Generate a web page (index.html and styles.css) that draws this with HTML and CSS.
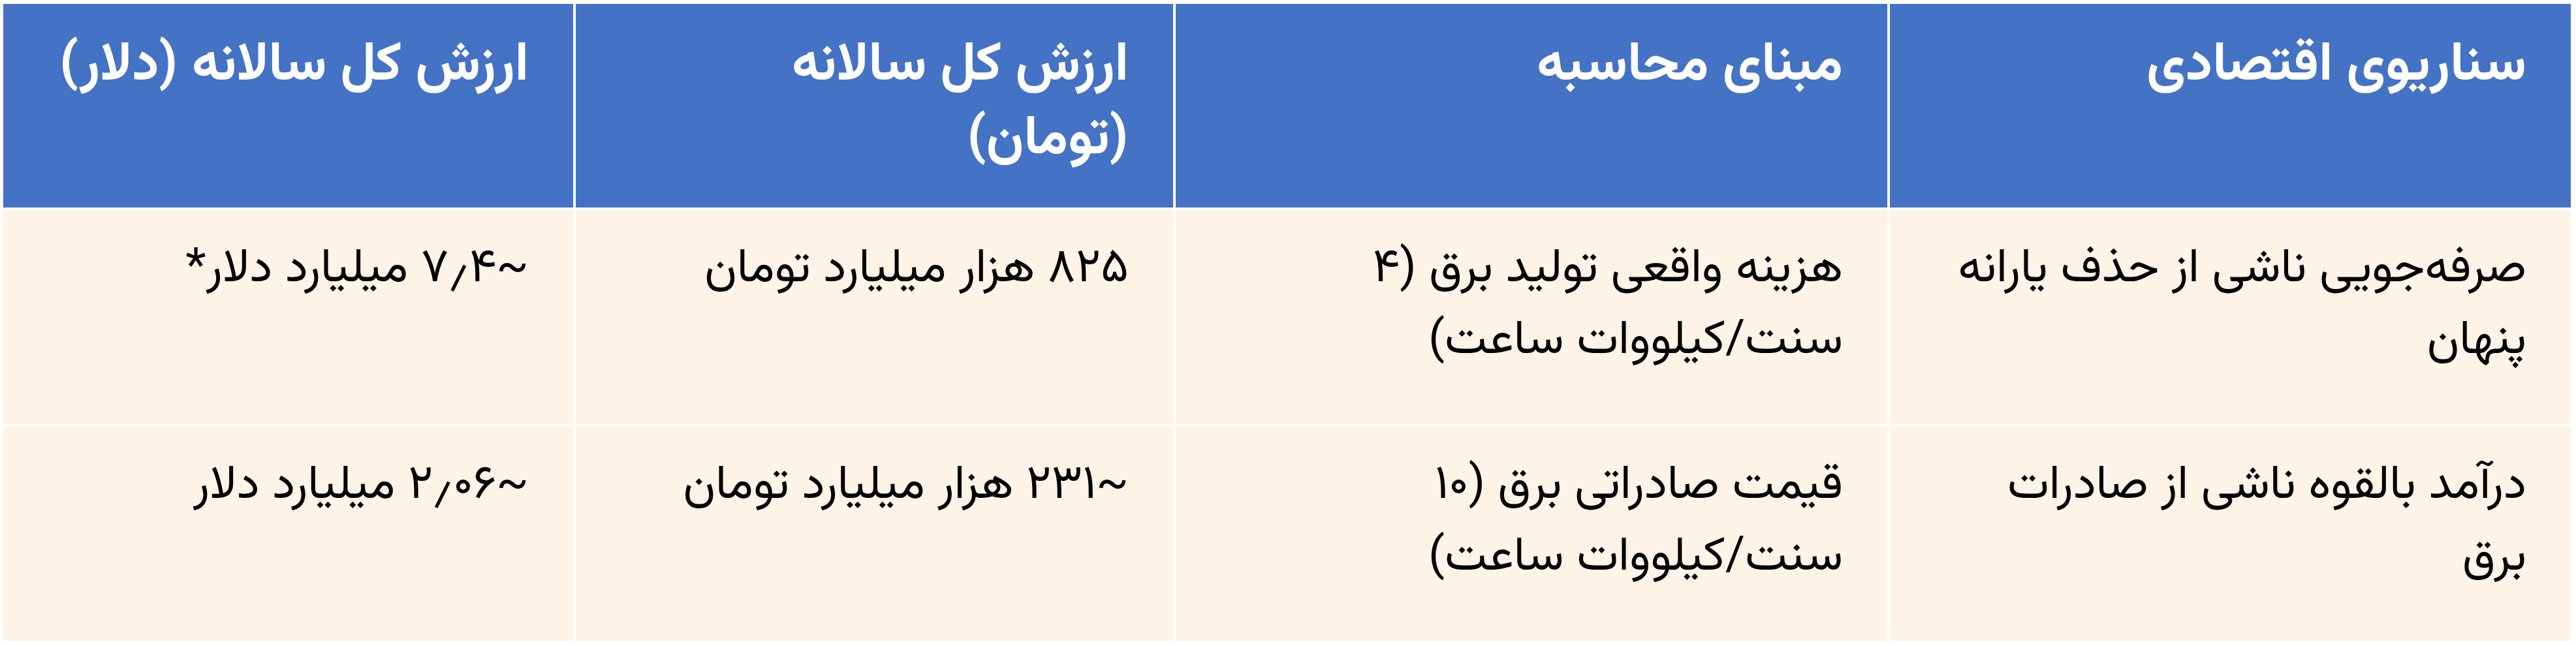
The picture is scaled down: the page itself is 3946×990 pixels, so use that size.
FILE: index.html
```html
<!DOCTYPE html>
<html lang="fa" dir="rtl">
<head>
<meta charset="utf-8">
<title>ارزش اقتصادی</title>
<link rel="stylesheet" href="styles.css">
</head>
<body>
<table class="econ">
  <colgroup>
    <col class="c-scenario">
    <col class="c-basis">
    <col class="c-toman">
    <col class="c-dollar">
  </colgroup>
  <thead>
    <tr class="head-row">
      <th>سناریوی اقتصادی</th>
      <th>مبنای محاسبه</th>
      <th>ارزش کل سالانه (تومان)</th>
      <th>ارزش کل سالانه (دلار)</th>
    </tr>
  </thead>
  <tbody>
    <tr class="body-row">
      <td>صرفه‌جویی ناشی از حذف یارانه پنهان</td>
      <td>هزینه واقعی تولید برق (۴ <span class="unit">سنت/کیلووات</span> ساعت)</td>
      <td>۸۲۵ هزار میلیارد تومان</td>
      <td>~۷٫۴ میلیارد دلار*</td>
    </tr>
    <tr class="body-row">
      <td>درآمد بالقوه ناشی از صادرات برق</td>
      <td>قیمت صادراتی برق (۱۰ <span class="unit">سنت/کیلووات</span> ساعت)</td>
      <td>~۲۳۱ هزار میلیارد تومان</td>
      <td>~۲٫۰۶ میلیارد دلار</td>
    </tr>
  </tbody>
</table>
</body>
</html>
```
FILE: styles.css
```css
html, body {
  margin: 0;
  padding: 0;
  background: #ffffff;
}

body {
  font-family: "Vazirmatn", "Noto Sans Arabic", sans-serif;
}

.econ {
  border-collapse: separate;
  border-spacing: 4px;
  margin: 2px 4px 0 1px;
  table-layout: fixed;
  width: 3941px;
}

.c-scenario { width: 1043px; }
.c-basis { width: 1090px; }
.c-toman { width: 915px; }
.c-dollar { width: 873px; }

.econ th,
.econ td {
  text-align: right;
  vertical-align: top;
  padding: 36px 68px 0 70px;
  line-height: 110px;
}

.head-row {
  height: 312px;
}

.body-row {
  height: 328px;
}

.head-row th {
  background: #4472c4;
  color: #ffffff;
  font-weight: 700;
  font-size: 83px;
  line-height: 113px;
  padding-top: 40px;
}

.body-row td {
  background: #fef3e7;
  color: #000000;
  font-weight: 400;
  font-size: 73px;
}

.unit {
  white-space: nowrap;
}
```
